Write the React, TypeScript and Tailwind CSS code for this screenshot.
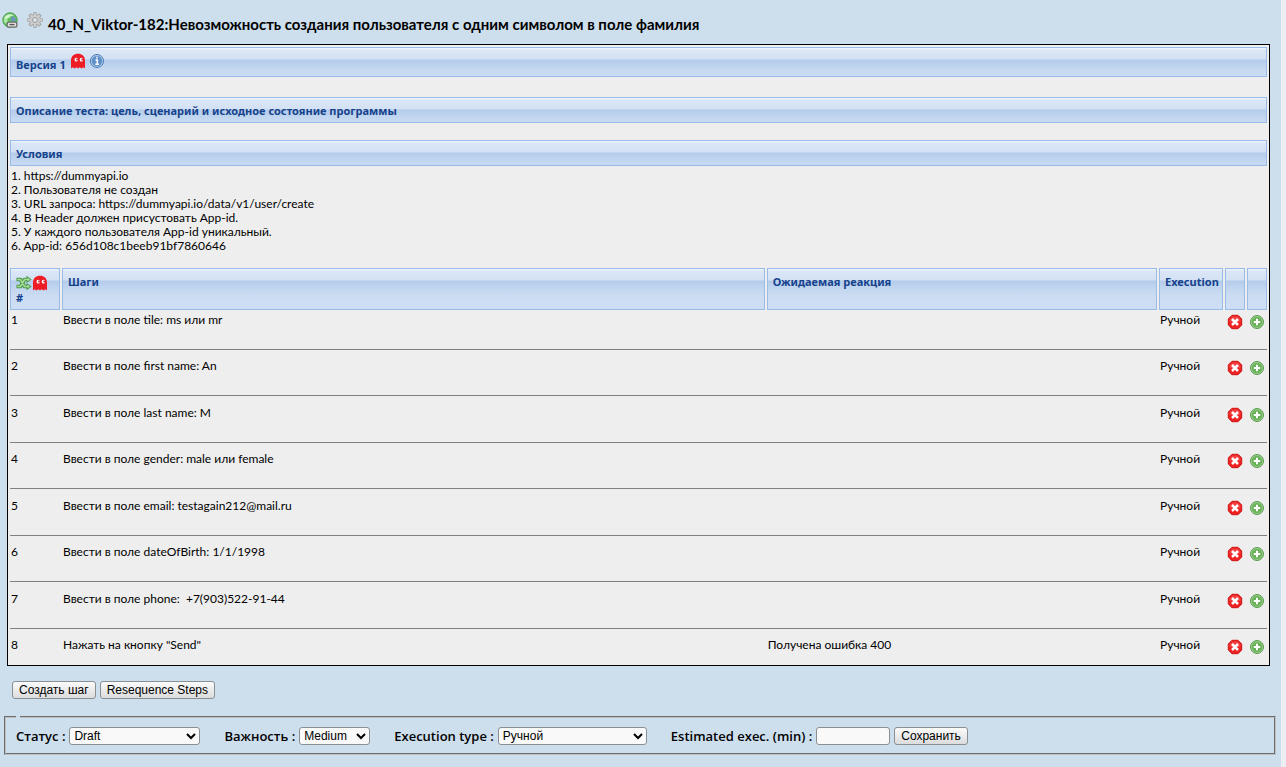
import { Fragment, ReactNode } from "react";

const preconditions = [
  "1. https://dummyapi.io",
  "2. Пользователя не создан",
  "3. URL запроса: https://dummyapi.io/data/v1/user/create",
  "4. В Header должен присустовать App-id.",
  "5. У каждого пользователя App-id уникальный.",
  "6. App-id: 656d108c1beeb91bf7860646",
];

const steps = [
  { action: "Ввести в поле tile: ms или mr", expected: "" },
  { action: "Ввести в поле first name: An", expected: "" },
  { action: "Ввести в поле last name: M", expected: "" },
  { action: "Ввести в поле gender: male или female", expected: "" },
  { action: "Ввести в поле email: testagain212@mail.ru", expected: "" },
  { action: "Ввести в поле dateOfBirth: 1/1/1998", expected: "" },
  { action: "Ввести в поле phone:\u00a0 +7(903)522-91-44", expected: "" },
  { action: 'Нажать на кнопку "Send"', expected: "Получена ошибка 400" },
];

const glossy =
  "border border-[#99bbe8] bg-[linear-gradient(to_bottom,#f2f7fd_0,#dbe7f6_2px,#d3e1f4_11px,#b4cceb_12px,#c6d9f1_22px,#cdddf3_30px)] font-['Noto_Sans',sans-serif] text-[11px] font-bold text-[#15428b]";

const headCell = `${glossy} pt-1.5 pl-[5px] text-left align-top leading-[14px]`;

const controlFont = "font-['Liberation_Sans',Arial,sans-serif] text-[12px] font-normal text-black";

function LinkIcon() {
  return (
    <svg width="16" height="16" viewBox="0 0 16 16" aria-hidden="true">
      <circle cx="8" cy="8" r="7.200" fill="#5fbf5c" stroke="#4b9f52" />
      <path d="M3 4Q6 1.300 9 2.500L8 5.500 5 7 6 9.500 3.500 12 1.500 8.500Z" fill="#a9e6a0" />
      <path d="M9.500 4 14 6.500 13 9.500 9 8.500Z" fill="#6d93c9" />
      <path d="M2.500 5Q7 .5 12.500 3.500Q8 3.500 4 7.500Z" fill="#e0f8dc" opacity=".8" />
      <rect x="4.500" y="9.500" width="11" height="6.300" rx="2" fill="#6b6b6b" />
      <rect x="5.800" y="10.800" width="8.400" height="3.700" rx="1.200" fill="#e2e2e2" />
      <path d="M7.500 12.600h5" stroke="#555" strokeWidth="1.400" />
    </svg>
  );
}

function GearIcon() {
  return (
    <svg width="16" height="16" viewBox="0 0 16 16" aria-hidden="true">
      <g stroke="#9c9c9c" strokeWidth="3.200">
        <path d="M8 .2v15.600M.2 8h15.600M2.500 2.500l11 11M13.500 2.500l-11 11" />
      </g>
      <circle cx="8" cy="8" r="5.800" fill="#9c9c9c" />
      <g stroke="#cccccc" strokeWidth="1.800">
        <path d="M8 .9v14.200M.9 8h14.200M3 3l10 10M13 3 3 13" />
      </g>
      <circle cx="8" cy="8" r="5.100" fill="#cccccc" />
      <circle cx="8" cy="8" r="2.400" fill="#dfe7ee" stroke="#909090" strokeWidth=".9" />
    </svg>
  );
}

function GhostIcon() {
  return (
    <svg width="16" height="16" viewBox="0 0 16 16" aria-hidden="true">
      <path
        d="M1 15.500V7.500C1 3.500 4 .8 8 .8s7 2.700 7 6.700v8l-1.700-1.300-1.800 1.300-1.800-1.300L8 15.500l-1.700-1.300-1.800 1.300-1.800-1.300Z"
        fill="#ee1c25"
      />
      <ellipse cx="6.200" cy="6.700" rx="1.700" ry="1.900" fill="#fff" />
      <ellipse cx="11.400" cy="6.700" rx="1.700" ry="1.900" fill="#fff" />
      <circle cx="7" cy="6.500" r="1" fill="#d2303e" />
      <circle cx="12.200" cy="6.500" r="1" fill="#d2303e" />
    </svg>
  );
}

function InfoIcon() {
  return (
    <svg width="16" height="16" viewBox="0 0 16 16" aria-hidden="true">
      <circle cx="8" cy="8" r="6.500" fill="#b9d1ec" stroke="#4678b4" />
      <circle cx="8" cy="8" r="5.200" fill="#5f8fc9" />
      <path d="M8 3.800v1.700M6.500 7H8.300v4M6.300 11.200h3.600" stroke="#fff" strokeWidth="1.500" fill="none" />
    </svg>
  );
}

function ShuffleIcon() {
  return (
    <svg width="16" height="16" viewBox="0 0 16 16" aria-hidden="true">
      <g fill="none" stroke="#4a964a" strokeWidth="3.600">
        <path d="M.5 4.500H4.500L8.500 11.500H12M.5 11.500H4.500L8.500 4.500H12" />
      </g>
      <path d="M10.500 .8 15.700 4.500 10.500 8ZM10.500 8 15.700 11.500 10.500 15.200Z" fill="#4a964a" />
      <g fill="none" stroke="#a5dd92" strokeWidth="1.600">
        <path d="M1.300 4.500H4.500L8.500 11.500H13M1.300 11.500H4.500L8.500 4.500H13" />
      </g>
      <path d="M11.500 2.700 14.200 4.500 11.500 6.300ZM11.500 9.700 14.200 11.500 11.500 13.300Z" fill="#a5dd92" />
    </svg>
  );
}

function DeleteIcon() {
  return (
    <svg width="16" height="16" viewBox="0 0 16 16" aria-hidden="true">
      <path d="M5 1.300h6L14.700 5v6L11 14.700H5L1.300 11V5Z" fill="#ee2222" stroke="#d01212" strokeLinejoin="round" />
      <path d="M5.400 2.500h5.200L13.500 5.400V8h-11V5.400Z" fill="#f76060" opacity=".5" />
      <path d="m5 5 6 6M11 5l-6 6" stroke="#fff" strokeWidth="2.500" />
    </svg>
  );
}

function AddIcon() {
  return (
    <svg width="16" height="16" viewBox="0 0 16 16" aria-hidden="true">
      <circle cx="8" cy="8" r="6.500" fill="#9fd090" stroke="#5a9c50" />
      <circle cx="8" cy="8" r="5.200" fill="#6bb35a" />
      <path d="M8 4.800v6.400M4.800 8h6.400" stroke="#fff" strokeWidth="2" />
    </svg>
  );
}

function IconButton({ label, children }: { label: string; children: ReactNode }) {
  return (
    <button type="button" aria-label={label} className="block size-4 shrink-0 cursor-pointer">
      {children}
    </button>
  );
}

function PushButton({ children }: { children: ReactNode }) {
  return (
    <button
      type="button"
      className={`${controlFont} h-[18px] rounded-[3px] border border-[#8a8f94] bg-linear-to-b from-[#fbfbfb] to-[#dcdcdc] px-1.5 leading-4 whitespace-nowrap`}
    >
      {children}
    </button>
  );
}

function Choice({ id, label, value, width }: { id: string; label: string; value: string; width: string }) {
  return (
    <div className="flex items-center gap-1">
      <label htmlFor={id}>{label}</label>
      <select
        id={id}
        defaultValue={value}
        className={`${controlFont} ${width} h-[18px] rounded-[3px] border border-[#8a8f94] bg-[#f9f9f9]`}
      >
        <option>{value}</option>
      </select>
    </div>
  );
}

export default function App() {
  return (
    <div className="min-h-screen border-r-[5px] border-[#ebeef2] bg-[#cddeec] pt-3 pb-3 font-[Lato,sans-serif] text-[12px] leading-[14px] text-black">
      <header className="flex h-8 items-start pl-0.5">
        <IconButton label="Direct link">
          <LinkIcon />
        </IconButton>
        <span className="ml-[9px]">
          <IconButton label="Actions">
            <GearIcon />
          </IconButton>
        </span>
        <h1 className="ml-[5px] pt-1 text-[15px] leading-4 font-bold">
          40_N_Viktor-182:Невозможность создания пользователя с одним символом в поле фамилия
        </h1>
      </header>

      <main className="mr-[11px] ml-[7px] border border-black bg-[#eeeeee]">
        <div className="px-0.5 pt-0.5">
          <div className={`${glossy} flex h-[30px] items-start gap-1 pt-[5px] pl-[5px]`}>
            <h2 className="pt-[5px] leading-[14px]">Версия 1</h2>
            <span className="flex gap-[3px]">
              <IconButton label="Ghost">
                <GhostIcon />
              </IconButton>
              <IconButton label="Info">
                <InfoIcon />
              </IconButton>
            </span>
          </div>
          <h2 className={`${glossy} mt-5 flex h-[26px] items-center pt-0.5 pl-[5px]`}>
            Описание теста: цель, сценарий и исходное состояние программы
          </h2>
          <h2 className={`${glossy} mt-[17px] flex h-[26px] items-center pt-0.5 pl-[5px]`}>Условия</h2>
          <div className="pt-[3px] pb-[13px] pl-px">
            {preconditions.map((line) => (
              <p key={line}>{line}</p>
            ))}
          </div>
        </div>

        <table className="w-full table-fixed border-separate border-spacing-0.5">
          <colgroup>
            <col className="w-[50px]" />
            <col />
            <col className="w-[31.3%]" />
            <col className="w-[64px]" />
            <col className="w-[20px]" />
            <col className="w-[20px]" />
          </colgroup>
          <thead>
            <tr className="h-[42px]">
              <th className={headCell}>
                <span className="flex">
                  <IconButton label="Reorder">
                    <ShuffleIcon />
                  </IconButton>
                  <IconButton label="Ghost steps">
                    <GhostIcon />
                  </IconButton>
                </span>
                #
              </th>
              <th className={headCell}>Шаги</th>
              <th className={headCell}>Ожидаемая реакция</th>
              <th className={headCell}>Execution</th>
              <th className={headCell} />
              <th className={headCell} />
            </tr>
          </thead>
          <tbody>
            {steps.map((step, i) => (
              <Fragment key={step.action}>
                {i > 0 && (
                  <tr>
                    <td colSpan={6} className={i % 2 ? "pt-[9px] pb-1.5" : "pt-[9px] pb-[7px]"}>
                      <hr className="border-[#808080]" />
                    </td>
                  </tr>
                )}
                <tr className="h-[26px] align-top">
                  <td className="pt-px pl-px">{i + 1}</td>
                  <td className="pt-px pl-px">{step.action}</td>
                  <td className="pt-px pl-px">{step.expected}</td>
                  <td className="pt-px pl-px">Ручной</td>
                  <td className="pt-0.5 pl-0.5">
                    <IconButton label="Delete step">
                      <DeleteIcon />
                    </IconButton>
                  </td>
                  <td className="pt-0.5 pl-0.5">
                    <IconButton label="Insert step">
                      <AddIcon />
                    </IconButton>
                  </td>
                </tr>
              </Fragment>
            ))}
          </tbody>
        </table>
      </main>

      <div className="mt-[15px] flex gap-1 pl-3">
        <PushButton>Создать шаг</PushButton>
        <PushButton>Resequence Steps</PushButton>
      </div>

      <form>
        <fieldset className="mt-[17px] mr-[5px] ml-1 border-2 border-[#c0c0c0] px-2.5 pt-[9px] pb-2 [border-style:groove]">
          <legend className="h-0.5 px-0.5" />
          <div className="flex items-center gap-6 font-['Open_Sans',sans-serif] text-[13px] leading-[18px] font-semibold">
            <Choice id="status" label="Статус :" value="Draft" width="w-[131px]" />
            <Choice id="importance" label="Важность :" value="Medium" width="w-[71px]" />
            <Choice id="execution" label="Execution type :" value="Ручной" width="w-[149px]" />
            <div className="flex items-center gap-1">
              <label htmlFor="duration">Estimated exec. (min) :</label>
              <input
                id="duration"
                type="text"
                className={`${controlFont} h-[18px] w-[74px] rounded-[3px] border border-[#8a8f94] bg-[#f9f9f9] px-1`}
              />
              <PushButton>Сохранить</PushButton>
            </div>
          </div>
        </fieldset>
      </form>
    </div>
  );
}
